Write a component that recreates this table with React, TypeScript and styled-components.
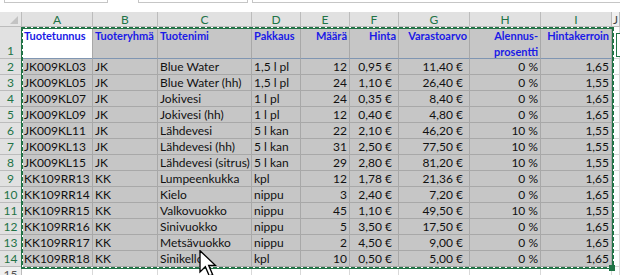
import React from "react";
import styled, { createGlobalStyle } from "styled-components";

const GlobalStyle = createGlobalStyle`
  html, body { margin: 0; padding: 0; background: #ffffff; overflow: hidden; }
  #root { width: 620px; height: 275px; }
`;

const GREEN = "#217346";
const FONT = `"Lato", "Liberation Sans", "DejaVu Sans", sans-serif`;

const COLS = [
  { letter: "A", w: 71, align: "left" },
  { letter: "B", w: 65, align: "left" },
  { letter: "C", w: 94, align: "left" },
  { letter: "D", w: 49, align: "left" },
  { letter: "E", w: 49, align: "right" },
  { letter: "F", w: 49, align: "right" },
  { letter: "G", w: 71, align: "right" },
  { letter: "H", w: 71, align: "right" },
  { letter: "I", w: 71, align: "right" },
] as const;

type Align = "left" | "right";

const HEADERS: { text: React.ReactNode; align: Align }[] = [
  { text: "Tuotetunnus", align: "left" },
  { text: "Tuoteryhmä", align: "left" },
  { text: "Tuotenimi", align: "left" },
  { text: "Pakkaus", align: "left" },
  { text: "Määrä", align: "right" },
  { text: "Hinta", align: "right" },
  { text: "Varastoarvo", align: "right" },
  {
    text: (
      <>
        Alennus-
        <br />
        prosentti
      </>
    ),
    align: "right",
  },
  { text: "Hintakerroin", align: "right" },
];

const ROWS: string[][] = [
  ["JK009KL03", "JK", "Blue Water", "1,5 l pl", "12", "0,95 €", "11,40 €", "0 %", "1,65"],
  ["JK009KL05", "JK", "Blue Water (hh)", "1,5 l pl", "24", "1,10 €", "26,40 €", "0 %", "1,55"],
  ["JK009KL07", "JK", "Jokivesi", "1 l pl", "24", "0,35 €", "8,40 €", "0 %", "1,65"],
  ["JK009KL09", "JK", "Jokivesi (hh)", "1 l pl", "12", "0,40 €", "4,80 €", "0 %", "1,65"],
  ["JK009KL11", "JK", "Lähdevesi", "5 l kan", "22", "2,10 €", "46,20 €", "10 %", "1,55"],
  ["JK009KL13", "JK", "Lähdevesi (hh)", "5 l kan", "31", "2,50 €", "77,50 €", "10 %", "1,55"],
  ["JK009KL15", "JK", "Lähdevesi (sitrus)", "5 l kan", "29", "2,80 €", "81,20 €", "10 %", "1,55"],
  ["KK109RR13", "KK", "Lumpeenkukka", "kpl", "12", "1,78 €", "21,36 €", "0 %", "1,65"],
  ["KK109RR14", "KK", "Kielo", "nippu", "3", "2,40 €", "7,20 €", "0 %", "1,65"],
  ["KK109RR15", "KK", "Valkovuokko", "nippu", "45", "1,10 €", "49,50 €", "10 %", "1,55"],
  ["KK109RR16", "KK", "Sinivuokko", "nippu", "5", "3,50 €", "17,50 €", "0 %", "1,65"],
  ["KK109RR17", "KK", "Metsävuokko", "nippu", "2", "4,50 €", "9,00 €", "0 %", "1,65"],
  ["KK109RR18", "KK", "Sinikello", "kpl", "10", "0,50 €", "5,00 €", "0 %", "1,65"],
];

const Page = styled.div`
  position: relative;
  width: 620px;
  height: 275px;
  overflow: hidden;
  font-family: ${FONT};
  background: #ffffff;
`;

/* Lower edges of the name box and formula bar */
const FormulaStrip = styled.div`
  display: flex;
  height: 12px;
  align-items: flex-start;
`;

const FieldBox = styled.div<{ $left: number; $width?: number }>`
  margin-left: ${(p) => p.$left}px;
  ${(p) => (p.$width ? `width: ${p.$width}px;` : "flex: 1; margin-right: -4px;")}
  height: 2px;
  border: 1px solid #c6c6c6;
  border-top: none;
  background: #ffffff;
`;

const Sheet = styled.div`
  display: grid;
  grid-template-columns: 22px ${COLS.map((c) => `${c.w}px`).join(" ")} 1fr;
  grid-template-rows: 15px 32px repeat(13, 16px) 16px;
`;

const Corner = styled.div`
  position: relative;
  background: #e6e6e6;
  border-right: 1px solid #bcbcbc;
  border-bottom: 1px solid #bcbcbc;
  &::after {
    content: "";
    position: absolute;
    right: 3px;
    bottom: 2px;
    width: 0;
    height: 0;
    border-left: 8px solid transparent;
    border-bottom: 8px solid #c3c3c3;
  }
`;

const ColHeader = styled.div<{ $selected?: boolean }>`
  display: flex;
  align-items: center;
  justify-content: center;
  background: ${(p) => (p.$selected ? "#e1e1e1" : "#f0f0f0")};
  color: ${(p) => (p.$selected ? GREEN : "#444444")};
  border-right: 1px solid #bcbcbc;
  border-bottom: 1px solid #bcbcbc;
  font-size: 12px;
  line-height: 14px;
  padding-top: 1px;
`;

const RowHeader = styled.div<{ $selected?: boolean }>`
  display: flex;
  align-items: flex-end;
  justify-content: center;
  background: ${(p) => (p.$selected ? "#e1e1e1" : "#f0f0f0")};
  color: ${(p) => (p.$selected ? GREEN : "#555555")};
  border-right: 1px solid #bcbcbc;
  border-bottom: 1px solid #bcbcbc;
  font-size: 12px;
  line-height: 15px;
`;

const Cell = styled.div<{ $align: Align; $active?: boolean; $blank?: boolean; $euro?: boolean }>`
  display: flex;
  flex-direction: column;
  justify-content: flex-end;
  align-items: ${(p) => (p.$align === "left" ? "flex-start" : "flex-end")};
  overflow: hidden;
  white-space: nowrap;
  background: ${(p) => (p.$active || p.$blank ? "#ffffff" : "#c6c6c6")};
  border-right: 1px solid ${(p) => (p.$blank ? "#d9d9d9" : "#a8a8a8")};
  border-bottom: 1px solid ${(p) => (p.$blank ? "#d9d9d9" : "#a8a8a8")};
  padding: 0 ${(p) => (p.$euro ? 6 : 2)}px 0 2px;
  font-size: 12px;
  line-height: 15px;
  color: #111111;
`;

/* Row 1 titles: bold blue, top aligned, wrapping */
const TitleCell = styled(Cell)`
  justify-content: flex-start;
  text-align: ${(p) => p.$align};
  white-space: normal;
  border-bottom-color: #8096b2;
  padding: 1px 2px 0 2px;
  font-size: 11px;
  line-height: 16px;
  font-weight: 700;
  color: #1a1ae6;
`;

/* Copy marquee around A1:I14 */
const Marquee = styled.div`
  position: absolute;
  left: 21px;
  top: 27px;
  width: 593px;
  height: 242px;
  pointer-events: none;
`;

const Edge = styled.div<{ $side: "top" | "bottom" | "left" | "right" }>`
  position: absolute;
  background: ${GREEN};
  ${(p) =>
    p.$side === "top" || p.$side === "bottom"
      ? `left: 0; right: 0; height: 2px; ${p.$side}: 0;`
      : `top: 0; bottom: 0; width: 2px; ${p.$side}: 0;`}
  &::after {
    content: "";
    position: absolute;
    ${(p) =>
      p.$side === "top" || p.$side === "bottom"
        ? `left: 0; right: 0; top: 0; height: 1px;
           background: repeating-linear-gradient(90deg, transparent 0 4px, #ffffff 4px 6px);`
        : `top: 0; bottom: 0; left: 1px; width: 1px;
           background: repeating-linear-gradient(180deg, transparent 0 4px, #ffffff 4px 6px);`}
  }
`;

const FillHandle = styled.div`
  position: absolute;
  left: 609px;
  top: 265px;
  width: 6px;
  height: 6px;
  background: ${GREEN};
`;

const OptionsTab = styled.div`
  position: absolute;
  left: 616px;
  top: 33px;
  width: 10px;
  height: 22px;
  border: 1px solid ${GREEN};
  background: #ffffff;
`;

const Pointer = styled.svg`
  position: absolute;
  left: 199px;
  top: 250px;
  width: 18px;
  height: 28px;
`;

export default function App() {
  return (
    <Page>
      <GlobalStyle />
      <FormulaStrip>
        <FieldBox $left={4} $width={102} />
        <FieldBox $left={30} $width={108} />
        <FieldBox $left={4} />
      </FormulaStrip>
      <Sheet>
        <Corner />
        {COLS.map((c) => (
          <ColHeader key={c.letter} $selected>
            {c.letter}
          </ColHeader>
        ))}
        <ColHeader>J</ColHeader>

        <RowHeader $selected>1</RowHeader>
        {HEADERS.map((h, i) => (
          <TitleCell key={i} $align={h.align} $active={i === 0}>
            <span>{h.text}</span>
          </TitleCell>
        ))}
        <Cell $align="left" $blank />

        {ROWS.map((row, r) => (
          <React.Fragment key={r}>
            <RowHeader $selected>{r + 2}</RowHeader>
            {row.map((v, i) => (
              <Cell key={i} $align={COLS[i].align} $euro={v.endsWith("€")}>
                {v}
              </Cell>
            ))}
            <Cell $align="left" $blank />
          </React.Fragment>
        ))}

        <RowHeader>15</RowHeader>
        {COLS.map((c) => (
          <Cell key={c.letter} $align="left" $blank />
        ))}
        <Cell $align="left" $blank />
      </Sheet>

      <Marquee>
        <Edge $side="top" />
        <Edge $side="bottom" />
        <Edge $side="left" />
        <Edge $side="right" />
      </Marquee>
      <FillHandle />
      <OptionsTab />

      <Pointer viewBox="0 0 13 21">
        <path
          d="M0.5 0.5 L0.5 16.5 L4.5 12.5 L7.5 19.5 L10 18.5 L7 11.5 L12 11.5 Z"
          fill="#ffffff"
          stroke="#000000"
          strokeWidth="1"
          strokeLinejoin="miter"
        />
      </Pointer>
    </Page>
  );
}
